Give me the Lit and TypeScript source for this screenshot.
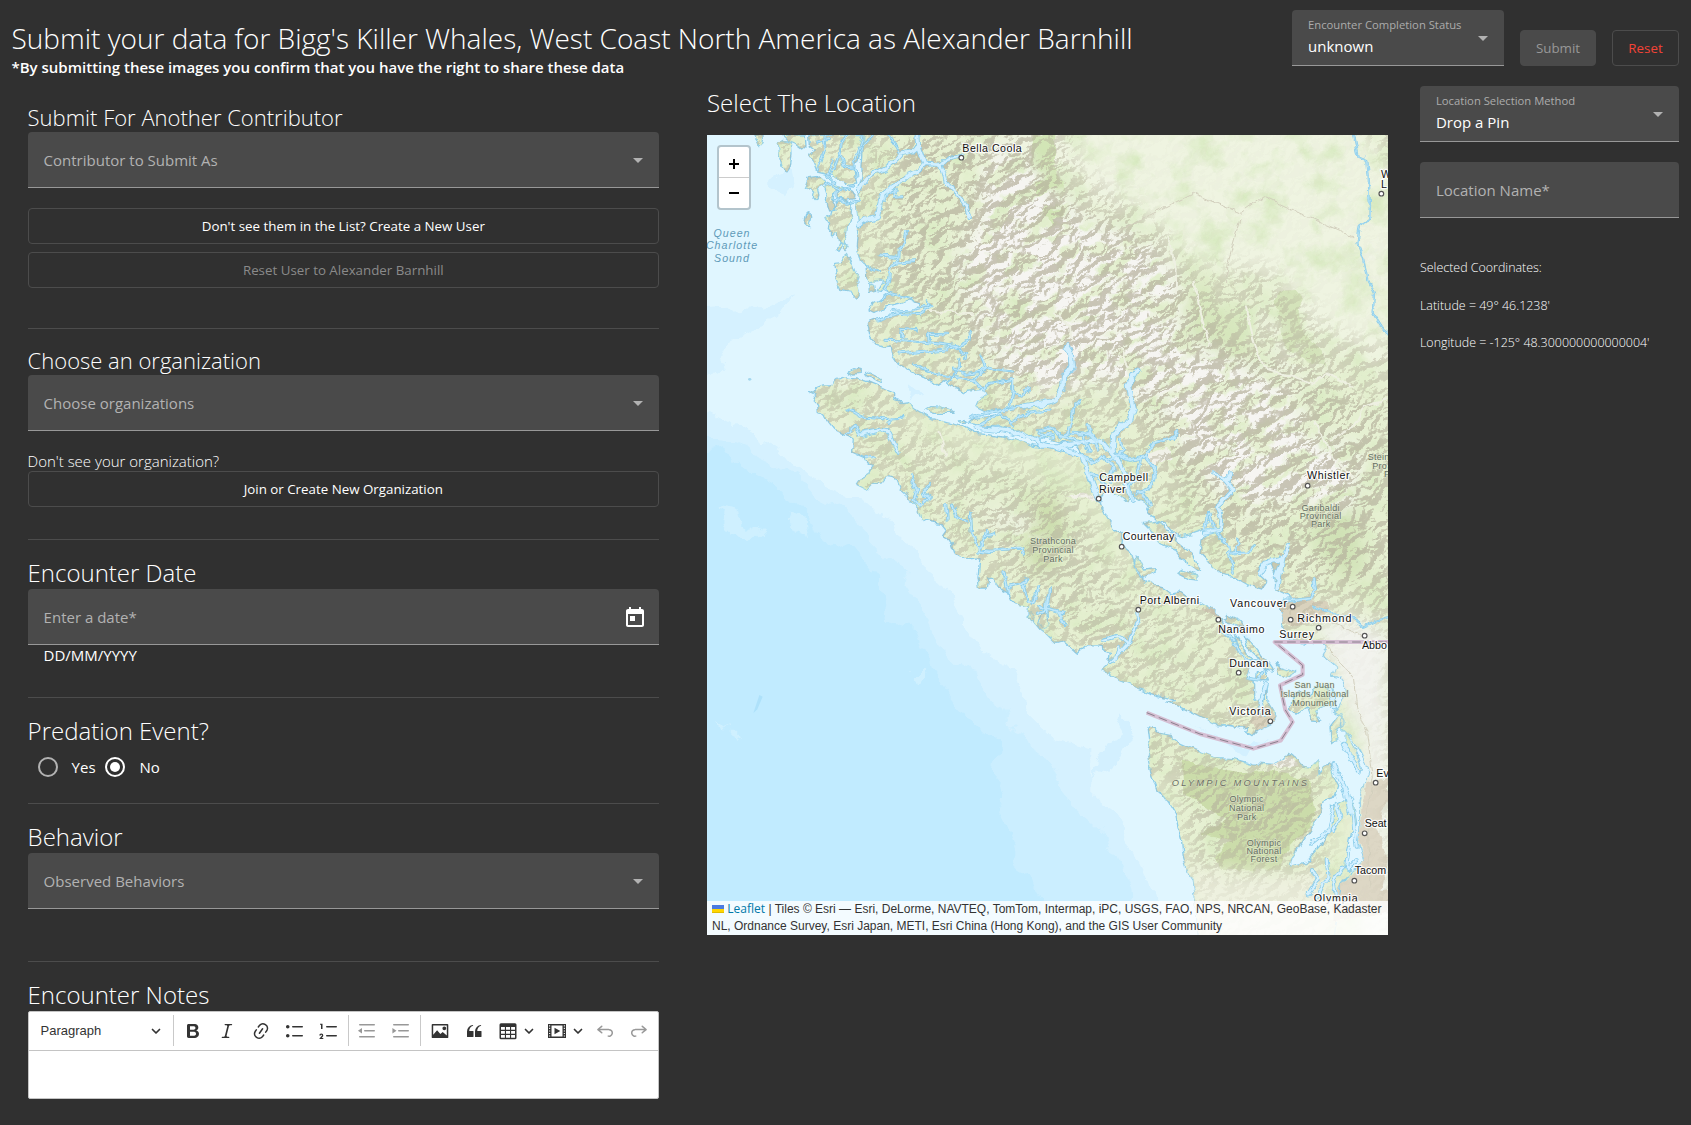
import { LitElement, html, css, svg } from "lit";
import { customElement, property } from "lit/decorators.js";

/* ---------- form field ---------- */
@customElement("form-field")
class FormField extends LitElement {
  @property() label = "";
  @property() value = "";
  @property() icon = "";
  static styles = css`
    :host { display: block; }
    .box {
      box-sizing: border-box; height: 56px; padding: 0 16px; display: flex; align-items: center;
      justify-content: space-between; background: #4a4a4a; border-bottom: 1px solid #989898;
      border-radius: 4px 4px 0 0;
    }
    .label { font-size: 15px; line-height: 22px; color: #b2b2b2; white-space: nowrap; }
    .stack { display: flex; flex-direction: column; padding-bottom: 3px; }
    .small { font-size: 11.25px; line-height: 20px; color: #acacac; white-space: nowrap; }
    .value { font-size: 15px; line-height: 22px; color: #fff; }
    .arrow { width: 0; border: 5px solid transparent; border-top-color: #b2b2b2; border-bottom: 0; margin-right: -1px; }
    .arrow-box { padding: 2px 1px 0 0; }
    .cal { width: 24px; height: 24px; fill: #fff; margin: 3px -4px 0 0; }
  `;
  render() {
    return html`<div class="box">
      ${this.value
        ? html`<div class="stack"><span class="small">${this.label}</span><span class="value">${this.value}</span></div>`
        : html`<span class="label">${this.label}</span>`}
      ${this.icon === "arrow" ? html`<div class="arrow-box"><div class="arrow"></div></div>` : ""}
      ${this.icon === "calendar"
        ? html`<svg class="cal" viewBox="0 0 24 24"><path d="M19 3h-1V1h-2v2H8V1H6v2H5c-1.11 0-1.99.9-1.99 2L3 19c0 1.1.89 2 2 2h14c1.1 0 2-.9 2-2V5c0-1.1-.9-2-2-2zm0 16H5V8h14v11zM7 10h5v5H7z"/></svg>`
        : ""}
    </div>`;
  }
}

/* ---------- rich text editor ---------- */
const ICONS: Record<string, string> = {
  bold: "M10.187 17H5.773c-.637 0-1.092-.138-1.364-.415-.273-.277-.409-.718-.409-1.323V4.738c0-.617.14-1.062.419-1.332.279-.27.73-.406 1.354-.406h4.68c.69 0 1.288.041 1.793.124.506.083.96.242 1.36.478.341.197.644.447.906.75a3.262 3.262 0 0 1 .808 2.162c0 1.401-.722 2.426-2.167 3.075C15.05 10.175 16 11.315 16 13.01a3.756 3.756 0 0 1-2.296 3.504 6.1 6.1 0 0 1-1.517.377c-.571.073-1.238.11-2 .11zm-.217-6.217H7v4.087h3.069c1.977 0 2.965-.69 2.965-2.072 0-.707-.256-1.22-.768-1.537-.512-.319-1.277-.478-2.296-.478zM7 5.13v3.619h2.606c.729 0 1.292-.067 1.69-.2a1.6 1.6 0 0 0 .91-.765c.165-.267.247-.566.247-.897 0-.707-.26-1.176-.778-1.409-.519-.232-1.31-.348-2.375-.348H7z",
  italic: "m9.586 14.633.021.004c-.036.335.095.655.393.962.082.083.173.15.274.201h1.474a.6.6 0 1 1 0 1.2H5.304a.6.6 0 0 1 0-1.2h1.15c.474-.07.809-.182 1.005-.334.157-.122.291-.32.404-.597l2.416-9.55a1.053 1.053 0 0 0-.281-.823 1.12 1.12 0 0 0-.442-.296H8.15a.6.6 0 0 1 0-1.2h6.443a.6.6 0 1 1 0 1.2h-1.195c-.376.056-.65.155-.823.296-.215.175-.423.439-.623.79l-2.366 9.347z",
  link: "m11.077 15 .991-1.416a.75.75 0 1 1 1.229.86l-1.148 1.64a.748.748 0 0 1-.217.206 5.251 5.251 0 0 1-8.503-5.955.741.741 0 0 1 .12-.274l1.147-1.639a.75.75 0 1 1 1.228.86L4.933 10.7l.006.003a3.75 3.75 0 0 0 6.132 4.294l.006.004zm5.494-5.335a.748.748 0 0 1-.12.274l-1.147 1.639a.75.75 0 1 1-1.228-.86l.86-1.23a3.75 3.75 0 0 0-6.144-4.301l-.86 1.229a.75.75 0 0 1-1.229-.86l1.148-1.64a.748.748 0 0 1 .217-.206 5.251 5.251 0 0 1 8.503 5.955zm-4.563-2.532a.75.75 0 0 1 .184 1.045l-3.155 4.505a.75.75 0 1 1-1.229-.86l3.155-4.506a.75.75 0 0 1 1.045-.184z",
  bullets: "M7 5.75c0 .414.336.75.75.75h9.5a.75.75 0 1 0 0-1.5h-9.5a.75.75 0 0 0-.75.75zm-6 0C1 4.784 1.777 4 2.75 4c.966 0 1.75.777 1.75 1.75 0 .966-.777 1.75-1.75 1.75C1.784 7.5 1 6.723 1 5.75zm6 9c0 .414.336.75.75.75h9.5a.75.75 0 1 0 0-1.5h-9.5a.75.75 0 0 0-.75.75zm-6 0c0-.966.777-1.75 1.75-1.75.966 0 1.75.777 1.75 1.75 0 .966-.777 1.75-1.75 1.75-.966 0-1.75-.777-1.75-1.75z",
  numbers: "M7 5.75c0 .414.336.75.75.75h9.5a.75.75 0 1 0 0-1.5h-9.5a.75.75 0 0 0-.75.75zM3.5 3v5H2V3.7H1v-1h2.5V3zM.343 17.857l2.59-3.257H2.92a.6.6 0 1 0-1.04 0H.302a2 2 0 1 1 3.995 0h-.001c-.048.405-.16.734-.333.988-.175.254-.59.692-1.244 1.312H4.3v1h-4l.043-.043zM7 14.75a.75.75 0 0 1 .75-.75h9.5a.75.75 0 1 1 0 1.5h-9.5a.75.75 0 0 1-.75-.75z",
  outdent: "M2 3.75c0 .414.336.75.75.75h14.5a.75.75 0 1 0 0-1.5H2.75a.75.75 0 0 0-.75.75zm5 6c0 .414.336.75.75.75h9.5a.75.75 0 1 0 0-1.5h-9.5a.75.75 0 0 0-.75.75zM2.75 16.5h14.5a.75.75 0 1 0 0-1.5H2.75a.75.75 0 1 0 0 1.5zM5 6.9v5.7L.9 9.75z",
  indent: "M2 3.75c0 .414.336.75.75.75h14.5a.75.75 0 1 0 0-1.5H2.75a.75.75 0 0 0-.75.75zm5 6c0 .414.336.75.75.75h9.5a.75.75 0 1 0 0-1.5h-9.5a.75.75 0 0 0-.75.75zM2.75 16.5h14.5a.75.75 0 1 0 0-1.5H2.75a.75.75 0 1 0 0 1.5zM1.4 6.9v5.7l4.1-2.85z",
  image: "M2.6 2.9h14.8a.9.9 0 0 1 .9.9v12.4a.9.9 0 0 1-.9.9H2.6a.9.9 0 0 1-.9-.9V3.8a.9.9 0 0 1 .9-.9zM3.2 4.4v9.3l3.9-4.4 3.3 3.6 2.3-2 4.1 3.6V4.4zM14.3 5.4a1.9 1.9 0 1 1 0 3.8 1.9 1.9 0 0 1 0-3.8z",
  quote: "M3 10.423a6.5 6.5 0 0 1 6.056-6.408l.038.67C6.448 5.423 5.354 7.663 5.22 10H9c.552 0 .5.432.5.986v4.511c0 .554-.448.503-1 .503h-5c-.552 0-.5-.449-.5-1.003v-4.574zm8 0a6.5 6.5 0 0 1 6.056-6.408l.038.67c-2.646.739-3.74 2.979-3.873 5.315H17c.552 0 .5.432.5.986v4.511c0 .554-.448.503-1 .503h-5c-.552 0-.5-.449-.5-1.003v-4.574z",
  table: "M3 2.2h14a1.5 1.5 0 0 1 1.5 1.5v13a1.5 1.5 0 0 1-1.5 1.5H3a1.5 1.5 0 0 1-1.5-1.5v-13A1.5 1.5 0 0 1 3 2.2zM3 6v2.8h3.9V6zm5 0v2.8h4V6zm5.1 0v2.8H17V6zM3 9.9v2.8h3.9V9.9zm5 0v2.8h4V9.9zm5.1 0v2.8H17V9.9zM3 13.9v2.8h3.9v-2.8zm5 0v2.8h4v-2.8zm5.1 0v2.8H17v-2.8z",
  media: "M1 3h18v14H1zm1.1 1.3v1.1h1.1V4.300zm0 2.500v1.100h1.100V6.800zm0 2.600v1.100h1.100V9.400zm0 2.600v1.100h1.100V12zm0 2.500v1.100h1.100v-1.100zM16.800 4.300v1.100h1.100V4.300zm0 2.500v1.100h1.100V6.800zm0 2.600v1.100h1.100V9.400zm0 2.600v1.100h1.100V12zm0 2.500v1.100h1.100v-1.100zM4.500 4.500v11h11v-11zM7.500 6.700l5.800 3.300-5.800 3.300z",
  undo: "m5.042 9.367 2.189 1.837a.75.75 0 0 1-.965 1.149l-3.788-3.18a.747.747 0 0 1-.21-.284.75.75 0 0 1 .17-.945L6.23 4.762a.75.75 0 1 1 .964 1.15L4.863 7.866h8.917A.75.75 0 0 1 14 7.9a4 4 0 1 1-1.477 7.718l.344-1.489a2.5 2.5 0 1 0 1.094-4.73l.008-.032H5.042z",
  redo: "m14.958 9.367-2.189 1.837a.75.75 0 0 0 .965 1.149l3.788-3.18a.747.747 0 0 0 .21-.284.75.75 0 0 0-.17-.945L13.77 4.762a.75.75 0 1 0-.964 1.15l2.331 1.955H6.22A.75.75 0 0 0 6 7.9a4 4 0 1 0 1.477 7.718l-.344-1.489A2.5 2.5 0 1 1 6.039 9.400l-.008-.032h8.927z",
};

@customElement("notes-editor")
class NotesEditor extends LitElement {
  static styles = css`
    :host { display: block; }
    .editor { box-sizing: border-box; height: 88px; background: #fff; border: 1px solid #c4c4c4; border-radius: 2px; }
    .bar { box-sizing: border-box; height: 39px; border-bottom: 1px solid #c4c4c4; padding: 0 4px 1px; display: flex; align-items: center; gap: 4px; }
    .heading { box-sizing: border-box; width: 137.500px; padding: 0 8px; display: flex; align-items: center; justify-content: space-between; font: 13px "Liberation Sans", sans-serif; color: #333; }
    .heading span { padding-bottom: 1px; }
    .sep { width: 1px; height: 31px; background: #c9c9c9; }
    .btn { width: 30px; display: flex; justify-content: center; }
    .split { width: 45px; display: flex; align-items: center; gap: 6px; padding-left: 5px; box-sizing: border-box; }
    .icon { width: 20px; height: 20px; fill: #333; fill-rule: evenodd; flex: none; }
    .off { opacity: 0.5; }
    .chev { width: 10px; height: 10px; fill: none; stroke: #333; stroke-width: 1.7; stroke-linecap: round; stroke-linejoin: round; flex: none; }
  `;
  icon(n: string, off = false) {
    return html`<svg class="icon ${off ? "off" : ""}" viewBox="0 0 20 20"><path d=${ICONS[n]}></path></svg>`;
  }
  chev() { return html`<svg class="chev" viewBox="0 0 10 10"><path d="M1.500 3.500 5 7l3.500-3.500"/></svg>`; }
  btn(n: string, off = false) { return html`<div class="btn">${this.icon(n, off)}</div>`; }
  render() {
    return html`<div class="editor"><div class="bar">
      <div class="heading"><span>Paragraph</span>${this.chev()}</div>
      <div class="sep"></div>
      ${["bold", "italic", "link", "bullets", "numbers"].map((n) => this.btn(n))}
      <div class="sep"></div>
      ${this.btn("outdent", true)}${this.btn("indent", true)}
      <div class="sep"></div>
      ${this.btn("image")}${this.btn("quote")}
      <div class="split">${this.icon("table")}${this.chev()}</div>
      <div class="split">${this.icon("media")}${this.chev()}</div>
      ${this.btn("undo", true)}${this.btn("redo", true)}
    </div></div>`;
  }
}

/* ---------- map: three map units make one pixel ---------- */
const LAND = [
  // northern islands
  "M165 165L190 165 184 190 177 197 170 182Z",
  "M236 190L246 184 274 188 276 225 270 262 261 276 246 256 238 226Z",
  "M243 165L262 182 285 192 305 207 318 196 316 165Z",
  "M326 165L328 198 346 212 326 228 340 246 352 276 392 286 420 300 446 316 470 312 462 262 474 240 492 165Z",
  "M310 328L322 296 362 291 376 304 368 318 352 326 357 346 348 362 340 352 344 336 330 322Z",
  "M374 322L392 312 406 314 404 350 398 372 402 388 386 390 378 366 382 346Z",
  "M412 318L440 326 462 340 460 356 436 362 411 356Z",
  "M396 386L410 366 436 362 456 372 452 410 442 438 440 462 428 492 416 486 412 458 396 468 382 452 386 430 378 416 392 410Z",
  "M314 430L320 402 330 398 332 412 326 440Z",
  "M404 550L428 548 426 532 442 520 454 544 466 580 474 590 470 606 478 640 470 654 452 634 422 628 412 596Z",
  "M410 506L416 490 424 498 414 514Z M430 508L432 492 444 496 436 512Z",
  "M508 634L506 612 524 616 526 632Z M532 632L546 608 556 612 544 634Z",
  // mainland
  "M492 165L486 260 486 290 476 330 470 380 476 440 472 500 484 545 498 556 500 590 508 606 540 600 556 606 552 626 572 640 546 660 510 676 504 690 520 698 560 680 600 672 632 660 660 668 640 690 560 708 514 724 502 738 506 764 532 794 552 800 574 798 578 828 598 858 640 880 680 892 712 916 738 898 742 916 766 926 790 936 826 930 852 928 860 944 834 964 826 982 850 994 900 984 902 1002 866 1010 820 1016 806 1030 860 1040 900 1038 934 1052 974 1052 1000 1070 1030 1072 1060 1080 1142 1104 1158 1130 1164 1180 1186 1230 1204 1254 1218 1236 1262 1250 1282 1268 1290 1240 1330 1262 1350 1300 1390 1338 1392 1352 1450 1370 1480 1362 1516 1350 1530 1350 1506 1380 1500 1420 1538 1460 1570 1486 1610 1494 1650 1516 1684 1524 1700 1502 1674 1478 1680 1462 1710 1442 1724 1480 1728 1530 1770 1550 1766 1562 1740 1572 1752 1600 1742 1642 1776 1684 1800 1684 1870 1690 1880 1714 1872 1730 1908 1760 1898 1788 1920 1792 1936 1812 1940 1840 1920 1870 1900 1896 1926 1914 1920 1942 1950 1970 1976 2008 2010 2074 1986 2136 1978 2160 1980 2240 1976 2290 1992 2344 1960 2372 1930 2400 1916 2460 1900 2600 2100 2600 2100 100 480 100Z",
  "M1392 1326L1420 1360 1440 1390 1480 1420 1502 1474 1490 1474 1448 1440 1426 1412 1382 1390 1350 1350 1330 1330Z",
  "M1434 1480L1450 1470 1490 1486 1492 1500 1470 1498Z",
  "M1304 1440L1312 1430 1330 1470 1370 1466 1360 1480 1330 1494 1312 1474Z",
  // Gulf and San Juan islands
  "M1580 1606L1620 1624 1632 1640 1610 1636 1574 1622Z",
  "M1630 1670L1650 1684 1694 1738 1720 1776 1700 1770 1666 1724 1640 1700Z",
  "M1600 1650L1630 1706 1660 1740 1640 1742 1612 1700Z",
  "M1724 1750L1740 1762 1790 1778 1770 1790 1736 1780Z M1672 1772L1700 1774 1708 1800 1670 1798Z",
  "M1770 1880L1800 1832 1830 1850 1850 1818 1900 1830 1890 1870 1846 1890 1862 1922 1834 1920 1820 1880 1792 1902Z",
  "M1920 1900L1890 1940 1894 1990 1920 1980 1910 1950 1936 1930Z",
  "M1936 1960L1956 1990 1990 2070 1970 2072 1934 2000Z",
  // Vancouver Island
  "M326 934L340 940 350 926 368 918 386 918 412 898 436 890 468 894 500 904 530 916 560 930 584 940 584 960 606 968 620 966 642 984 680 1006 696 1016 740 1028 790 1040 826 1060 882 1066 948 1080 996 1098 1050 1106 1100 1112 1146 1124 1156 1160 1166 1212 1190 1240 1204 1280 1224 1320 1244 1348 1266 1362 1262 1394 1294 1420 1304 1450 1306 1476 1330 1500 1366 1518 1390 1524 1410 1538 1440 1536 1478 1562 1510 1572 1540 1590 1560 1612 1584 1660 1606 1680 1620 1716 1652 1756 1642 1790 1664 1812 1664 1856 1688 1870 1702 1822 1700 1860 1728 1908 1720 1926 1700 1936 1678 1946 1656 1970 1634 1954 1640 1940 1608 1950 1602 1938 1540 1932 1480 1902 1446 1886 1400 1866 1426 1862 1350 1840 1300 1820 1260 1804 1230 1778 1206 1770 1222 1756 1228 1720 1212 1716 1210 1696 1160 1694 1132 1720 1090 1684 1070 1690 1040 1660 1020 1646 984 1600 986 1580 940 1570 926 1540 900 1526 880 1494 866 1496 862 1524 838 1524 834 1490 840 1436 804 1440 766 1418 756 1390 726 1370 740 1350 724 1330 694 1326 670 1320 656 1290 630 1264 624 1250 600 1230 584 1190 560 1186 540 1210 520 1210 500 1230 468 1214 480 1196 506 1180 520 1160 492 1142 490 1130 458 1116 460 1080 434 1064 404 1048 380 1018 358 998 356 976 342 962 348 946Z",
  "M494 884L508 876 548 896 550 910 528 904Z M446 874L462 866 484 872 484 880 460 882Z",
  "M674 990L690 980 724 982 756 990 762 1000 700 1000Z M778 1020L798 1018 802 1026 784 1028Z",
  "M980 1606L994 1598 1006 1612 992 1626Z M1016 1630L1030 1600 1044 1600 1046 1640 1030 1646Z",
  // Olympic peninsula
  "M1344 1940L1366 1946 1380 1960 1410 1966 1440 1990 1500 2016 1540 2032 1600 2036 1660 2052 1720 2056 1756 2036 1768 2020 1786 2034 1800 2056 1830 2062 1850 2040 1854 2090 1870 2060 1890 2050 1900 2090 1916 2120 1906 2150 1870 2160 1862 2200 1840 2240 1804 2290 1776 2330 1770 2360 1820 2346 1860 2300 1884 2260 1900 2220 1894 2180 1930 2160 1960 2170 1970 2230 1954 2260 1940 2330 1950 2380 1920 2420 1900 2600 1496 2600 1486 2450 1480 2400 1466 2380 1450 2330 1444 2280 1434 2240 1426 2200 1408 2170 1394 2150 1370 2130 1352 2080 1342 2020 1350 1990Z",
];

// Inlets and channels: [stroke width, path]
const INLETS: [number, string][] = [
  [9, "M654 165L656 200 638 214 606 222 590 240 572 256 546 270 516 280 494 304 478 330"],
  [11, "M654 200L672 250 650 274 622 288 600 310 572 326 546 346 538 380 532 412 500 420 478 436"],
  [8, "M784 224L744 236 726 254 672 252M724 256L738 304 774 344 800 380 806 414"],
  [3, "M566 165L590 200 604 224M486 165L478 200 464 240 468 290M440 165L424 190 420 220 404 262 390 290M374 165L378 200 362 240 352 270M520 165L490 190 478 230M420 210L436 262 460 264M400 240L380 290 402 306M350 186L392 178 M404 360L440 370 474 362M376 310L420 330 464 320"],
  [4, "M620 458L612 494 598 508 596 542 570 560 566 600 552 630M540 528L592 532M596 546L644 542M552 364L560 342 592 330 584 352 606 350"],
  [3, "M500 556L520 570 536 576M540 660L570 640 606 650 636 656M572 694L630 690 690 676 684 664"],
  [4, "M530 720L590 704 660 700 696 680M552 778L620 780 700 790 770 800 812 778 810 754M600 822L680 812 770 804"],
  [3, "M604 770L606 748 650 752M690 786L688 764 740 762M770 804L798 820 796 836M668 866L700 880 750 886M776 834L776 870 738 910M640 846L680 870M760 866L800 880 840 874"],
  [4, "M846 822L858 862 890 870 938 876M858 862L820 900 770 890M820 900L850 930 870 910 938 898 938 930 960 946 988 926M940 930L930 976 900 990M812 1012L900 990 970 980 1050 970"],
  [4, "M832 1040L900 1000 930 1030 990 996 1050 990M940 1040L912 1010M1010 1090L1040 1060 1060 1064M962 980L1016 974"],
  [14, "M1100 802L1116 826 1118 860 1092 884 1090 924 1070 960 1030 970 970 980"],
  [5, "M1144 962L1122 976 1116 1020 1106 1064 1084 1070"],
  [14, "M1312 872L1298 896 1284 920 1292 960 1298 986 1290 1020 1262 1040 1240 1066 1238 1110"],
  [11, "M1020 1098L1080 1098 1140 1088 1200 1078 1224 1108 1262 1150 1280 1210 1300 1260"],
  [12, "M826 1044L900 1050 980 1068 1020 1090 1100 1112 1150 1124 1160 1170 1180 1220 1200 1260"],
  [6, "M1436 1058L1408 1080 1360 1090 1334 1130 1290 1140 1256 1128 1230 1140M1162 1034L1170 1066 1196 1080M1020 1050L1052 1042 1086 1070 1150 1090M1262 1080L1270 1110 1250 1130"],
  [6, "M1340 1130L1366 1160 1360 1200 1340 1230 1310 1236M1150 1120L1176 1150 1210 1130 1240 1160 1230 1200M1170 1180L1200 1200 1240 1230M1320 1140L1310 1190 1290 1220 1300 1262M1330 1240L1350 1280"],
  [5, "M1020 1060L1060 1072 M1116 1060L1180 1064 1196 1110M1150 1070L1170 1110"],
  [9, "M1544 1180L1574 1198 1600 1230 1576 1256 1548 1280 1566 1310 1562 1350 1516 1360M1596 1184L1582 1200"],
  [4, "M1530 1300L1540 1340 1584 1400 1600 1480M1580 1420L1640 1416 1664 1394M1526 1300L1516 1350 1560 1352M1600 1420L1620 1390 1610 1374"],
  [12, "M1762 1394L1748 1430 1740 1480 1732 1520M1740 1440L1700 1450 1680 1480M1746 1440L1730 1490"],
  [5, "M1842 1494L1846 1530 1830 1556 1780 1562 1750 1560M1774 1680L1812 1690"],
  [4, "M444 990L500 1012 556 1016 606 1012M566 1030L580 1016M434 1064L466 1036 476 1062 540 1048 558 1052"],
  [7, "M480 1066L540 1050 566 1058 580 1086 596 1116"],
  [5, "M634 1188L650 1230 640 1260 660 1280 690 1250 668 1240 692 1210M494 1130L520 1130M740 1276L744 1320M758 1276L770 1310 800 1320M812 1300L814 1360 840 1410 870 1414 940 1408 968 1408 976 1428M860 1352L850 1390 834 1416M864 1366L884 1362"],
  [5, "M912 1478L926 1540M928 1520L960 1512 980 1500M968 1514L984 1560 1000 1570 1016 1518M1040 1550L1036 1590 1016 1600M1048 1530L1040 1600M1020 1580L1050 1590 1090 1600M1076 1596L1096 1630"],
  [7, "M1314 1590L1318 1620 1302 1650 1290 1684 1256 1720 1230 1746M1290 1684L1250 1668 1210 1680M1254 1700L1244 1740"],
  [5, "M1560 1640L1600 1680M1600 1690L1640 1740 1690 1750M1644 1796L1680 1800 1690 1772"],
  [10, "M1696 1810L1680 1870 1690 1900M1900 2050L1916 2090 1940 2140 1950 2200M1890 1830L1900 1880M1930 1990L1976 2070"],
  [7, "M1950 2160L1960 2220 1970 2300M1900 2180L1888 2250 1836 2290M1910 2170L1922 2210 1900 2250M1950 2300L1940 2370 1970 2340M1836 2370L1850 2400 1826 2440M1880 2340L1886 2390 1850 2450M1930 2360L1900 2400 1910 2460"],
  [2, "M1962 165L1976 230 2002 240 2006 290 2010 380 2008 416 1980 436 1972 490 1990 540 2002 600 2022 640 2018 700 2050 750 2070 764"],
  [2, "M2070 1610L2030 1622 1990 1640 1960 1616 1900 1600 1840 1580"],
];

// Towns: marker x, marker y, name, name x, name y
const CITIES: [number, number, string, number, number][] = [
  [784, 233, "Bella Coola", 787, 216],
  [1196, 1256, "Campbell", 1198, 1203], [0, 0, "River", 1197, 1239],
  [2044, 341, "W", 2043, 294], [0, 0, "L", 2043, 324],
  [1823, 1217, "Whistler", 1821, 1197],
  [1265, 1400, "Courtenay", 1268, 1379],
  [1315, 1589, "Port Alberni", 1319, 1571],
  [1778, 1580, "Vancouver", 1590, 1580],
  [1555, 1619, "Nanaimo", 1555, 1658],
  [1772, 1619, "Richmond", 1792, 1625],
  [1856, 1643, "Surrey", 1738, 1673],
  [1994, 1667, "Abbo", 1986, 1707],
  [1616, 1778, "Duncan", 1588, 1760],
  [1711, 1924, "Victoria", 1588, 1904],
  [2027, 2108, "Ev", 2029, 2090],
  [1994, 2260, "Seat", 1994, 2240],
  [1963, 2402, "Tacom", 1964, 2381],
  [0, 0, "Olympia", 1841, 2467],
];

const WIDTH: Record<string, number> = {
  "Bella Coola": 178, Campbell: 146, River: 80, Whistler: 128, Courtenay: 155, "Port Alberni": 178,
  Vancouver: 171, Nanaimo: 138, Richmond: 162, Surrey: 104, Duncan: 117, Victoria: 124, Olympia: 132,
};

const PARKS: [string[], number, number, number][] = [
  [["Strathcona", "Provincial", "Park"], 1059, 1391, 27],
  [["Garibaldi", "Provincial", "Park"], 1862, 1292, 25],
  [["San Juan", "Islands National", "Monument"], 1844, 1824, 27],
  [["Olympic", "National", "Park"], 1640, 2166, 27],
  [["Olympic", "National", "Forest"], 1692, 2297, 25],
];

@customElement("coast-map")
class CoastMap extends LitElement {
  static styles = css`
    :host { display: block; }
    .map { position: relative; width: 681px; height: 800px; overflow: hidden; background: #e0f6ff; }
    .canvas { display: block; width: 681px; height: 800px; }
    .zoom { position: absolute; left: 10px; top: 10px; border: 2px solid rgba(0, 0, 0, 0.2); border-radius: 4px; background-clip: padding-box; width: 30px; background-color: #fff; }
    .zbtn { height: 30px; display: flex; align-items: center; justify-content: center; box-sizing: border-box; }
    .zbtn:first-child { height: 31px; border-bottom: 1px solid #ccc; padding-top: 3px; }
    .sign { width: 12px; height: 12px; stroke: #000; stroke-width: 2; }
    .credit { position: absolute; left: 0; right: 0; bottom: 0; height: 34px; padding: 0 5px; background: rgba(255, 255, 255, 0.8); font: 12px/17px "Liberation Sans", sans-serif; color: #333; white-space: nowrap; }
    .leaflet { color: #0078a8; font-family: "Open Sans", sans-serif; line-height: 1; }
    .flag { width: 12px; height: 8px; vertical-align: baseline; }
    .city { font: 32px "Liberation Sans", sans-serif; fill: #111; stroke: #fff; stroke-width: 7px; stroke-opacity: 0.85; paint-order: stroke; stroke-linejoin: round; }
    .park { font: 27px "Liberation Sans", sans-serif; fill: #646f61; stroke: #e9f0d8; stroke-width: 4px; stroke-opacity: 0.6; paint-order: stroke; text-anchor: middle; letter-spacing: 0.8px; }
    .park.cut { text-anchor: start; }
    .sea { font: italic 32px "Liberation Sans", sans-serif; fill: #5e9ab8; text-anchor: middle; letter-spacing: 3px; }
    .range { font: italic 28px "Liberation Sans", sans-serif; fill: #6b6e63; stroke: #e9f0d8; stroke-width: 3px; stroke-opacity: 0.5; paint-order: stroke; letter-spacing: 6px; }
  `;
  render() {
    const land = LAND.join(" ");
    return html`<div class="map">
      <svg class="canvas" viewBox="21 165 2043 2400">
        <defs>
          <clipPath id="land"><path d=${land}></path></clipPath>
          <filter id="relief" x="0" y="0" width="1" height="1" color-interpolation-filters="sRGB">
            <feTurbulence type="turbulence" baseFrequency="0.013 0.021" numOctaves="4" seed="11" result="n"></feTurbulence>
            <feColorMatrix in="n" type="matrix" values="0 0 0 0 0  0 0 0 0 0  0 0 0 0 0  1.2 0.5 0 0 0"></feColorMatrix>
            <feDiffuseLighting surfaceScale="34" diffuseConstant="1.300" lighting-color="#fff" result="l"><feDistantLight azimuth="250" elevation="50"></feDistantLight></feDiffuseLighting>
            <feColorMatrix in="l" type="matrix" values="0 0 0 0 0.71  0 0 0 0 0.69  0 0 0 0 0.61  -1.100 0 0 0 0.880"></feColorMatrix>
            <feComponentTransfer><feFuncA type="table" tableValues="0 0.420 0.620 0.700 0.720"></feFuncA></feComponentTransfer>
          </filter>
          <filter id="rock" x="0" y="0" width="1" height="1" color-interpolation-filters="sRGB">
            <feTurbulence type="fractalNoise" baseFrequency="0.013 0.022" numOctaves="5" seed="5"></feTurbulence>
            <feColorMatrix type="matrix" values="0 0 0 0 0.965  0 0 0 0 0.96  0 0 0 0 0.950  6 0 0 0 -2.250"></feColorMatrix>
          </filter>
          <filter id="meadow" x="0" y="0" width="1" height="1" color-interpolation-filters="sRGB">
            <feTurbulence type="fractalNoise" baseFrequency="0.012" numOctaves="5" seed="21"></feTurbulence>
            <feColorMatrix type="matrix" values="0 0 0 0 0.85  0 0 0 0 0.920  0 0 0 0 0.760  2.500 0 0 0 -1.100"></feColorMatrix>
          </filter>
          <filter id="soft" x="-0.300" y="-0.300" width="1.600" height="1.600"><feGaussianBlur stdDeviation="28"></feGaussianBlur></filter>
          <filter id="coastal" x="-0.100" y="-0.100" width="1.200" height="1.200"><feTurbulence type="fractalNoise" baseFrequency="0.03" numOctaves="3" seed="3"></feTurbulence><feDisplacementMap in="SourceGraphic" scale="22" xChannelSelector="R" yChannelSelector="G"></feDisplacementMap></filter>
          <filter id="depth" x="-0.100" y="-0.100" width="1.200" height="1.200"><feTurbulence type="fractalNoise" baseFrequency="0.012" numOctaves="4" seed="9"></feTurbulence><feDisplacementMap in="SourceGraphic" scale="80" xChannelSelector="R" yChannelSelector="G"></feDisplacementMap></filter>
          <mask id="reliefMask" maskUnits="userSpaceOnUse" x="0" y="100" width="2100" height="2500">
            <rect x="0" y="100" width="2100" height="2500" fill="#aaa"></rect>
            <g filter="url(#soft)">
              <path d="M600 165L1000 165 1120 380 1360 480 1440 620 1600 780 1840 880 2060 1000 2060 1520 1760 1500 1500 1300 1250 900 900 900 560 560Z" fill="#fff"></path>
              <path d="M1090 100L1970 100 2100 300 2100 800 1900 760 1700 560 1480 560 1350 420 1140 260Z" fill="#111"></path>
              <path d="M1840 1580L2070 1660 2070 2600 1880 2600 1900 1900Z" fill="#111"></path>
              <path d="M560 940L700 1000 1180 1120 1320 1500 1240 1460 1140 1260 900 1140 660 1060Z" fill="#444"></path>
              <path d="M700 1180L1100 1260 1240 1560 1300 1760 1100 1660Z" fill="#ccc"></path>
              <path d="M1440 2120L1800 2120 1800 2240 1560 2280Z" fill="#ddd"></path>
              <path d="M1460 2380L1900 2380 1900 2600 1460 2600Z M1350 2100L1430 2120 1480 2400 1440 2400Z" fill="#333"></path>
            </g>
          </mask>
          <mask id="rockMask" maskUnits="userSpaceOnUse" x="0" y="100" width="2100" height="2500">
            <g filter="url(#soft)">
              <path d="M860 210L960 220 1060 330 1160 420 1340 480 1440 600 1430 780 1560 820 1760 920 1840 1080 1980 1100 1960 1300 1720 1260 1640 1300 1500 1180 1400 1000 1200 900 1040 960 860 820 760 560 830 430Z" fill="#fff"></path>
              <path d="M980 520L1100 560 1120 680 1000 680Z M1320 680L1440 700 1440 800 1340 780Z" fill="#fff"></path>
              <path d="M1180 280L1260 320 1300 280Z M1940 440L2010 480 2060 640 1990 560Z M1640 660L1680 760 1760 880 1900 900Z" fill="#888"></path>
              <ellipse cx="440" cy="925" rx="36" ry="20" fill="#aaa"></ellipse>
              <path d="M820 1280L1000 1300 1080 1500 940 1400Z M1240 1700L1420 1740 1500 1780 1300 1720Z" fill="#777"></path>
            </g>
          </mask>
        </defs>

        <g filter="url(#depth)">
          <path d="M-80 700L150 690 300 640 290 660 200 730 100 790 40 880 -80 940Z M210 300L290 270 300 320 240 350Z" fill="#d5f1ff"></path>
          <path d="M-80 1000L40 1000 150 1060 240 1110 300 1180 430 1240 560 1300 620 1380 650 1440 720 1500 800 1640 850 1720 930 1760 960 1880 1060 1980 1180 2010 1180 2160 1260 2220 1340 2380 1380 2560 1400 2700 -80 2700Z" fill="#d5f1ff"></path>
          <path d="M-80 1080L100 1090 230 1150 320 1230 440 1300 540 1400 620 1520 700 1640 740 1740 830 1760 900 1880 950 1980 1060 2040 1110 2170 1220 2260 1290 2420 1320 2700 -80 2700Z" fill="#cbeeff"></path>
          <path d="M-80 1150L60 1120 220 1210 330 1330 460 1410 530 1500 550 1640 650 1660 700 1780 800 1900 900 1990 880 2120 960 2320 1030 2480 1060 2700 -80 2700Z" fill="#c1ebff"></path>
          <path d="M30 1280L100 1290 190 1360 160 1390 90 1360Z M250 1300L320 1330 330 1380 290 1360Z M50 1910L90 1950 80 1970Z M100 1970L120 1970 110 1990Z M630 1770L670 1770 650 1800Z" fill="#cff0ff"></path>
          <path d="M600 920L680 950 640 970Z M1420 1900L1560 1980 1700 1990 1620 2010Z M1260 1900L1300 1940 1240 2060 1180 2100 1240 1980Z M1600 1640L1660 1700 1640 1660Z" fill="#d3f0ff"></path>
        </g>
        <ellipse cx="149" cy="898" rx="5" ry="4" fill="#a5d7ee"></ellipse>
        <path d="M178 1845L188 1850 172 1888 160 1900Z" fill="#aee1fa"></path>

        <g filter="url(#coastal)">
          <path d=${land} fill="#e6f0d2" stroke="#8ccdea" stroke-width="4" stroke-linejoin="round"></path>
          <g clip-path="url(#land)">
            <path d="M840 165L1090 100 1980 100 2100 300 2100 900 1860 800 1700 600 1480 560 1300 420 1080 330Z" fill="#eff4e1" filter="url(#soft)"></path>
            <rect x="0" y="100" width="2100" height="2500" filter="url(#meadow)"></rect>
            <path d="M1000 165L1066 165 1064 260 1096 330 1080 450 1030 400 990 260Z" fill="#d2e5b6"></path>
            <path d="M1720 660L1740 632 1790 630 1812 656 1796 690 1800 740 1860 810 1880 860 1820 840 1750 800 1742 710Z" fill="#d4e3ba"></path>
            <path d="M1480 590L1510 570 1550 690 1620 690 1660 800 1640 880 1540 840 1440 760Z" fill="#d6e6bc" filter="url(#soft)"></path>
            <path d="M980 1250L1060 1240 1090 1300 1070 1480 1000 1480 970 1400 1010 1330Z" fill="#c9dba9" filter="url(#soft)"></path>
            <path d="M1820 1270L1960 1240 2000 1440 1980 1520 1880 1460Z" fill="#d0e2b6" filter="url(#soft)"></path>
            <path d="M1446 2034L1500 2056 1620 2080 1700 2072 1830 2100 1842 2190 1830 2240 1770 2300 1740 2370 1560 2366 1540 2330 1590 2280 1500 2260 1580 2220 1500 2170 1450 2140Z" fill="#cbdcaa"></path>
            <path d="M1460 2330L1560 2380 1880 2370 1900 2600 1470 2600Z" fill="#eef1df" filter="url(#soft)"></path>
            <path d="M1840 1600L2070 1640 2070 2600 1990 2600 1990 2000 1910 1800 1870 1700Z" fill="#f2f3ee" filter="url(#soft)"></path>
            <path d="M1746 1550L1880 1566 1886 1600 1830 1616 1800 1640 1740 1630 1750 1600Z M1640 1924L1700 1880 1740 1920 1680 1950Z M1500 1580L1550 1590 1570 1620 1550 1610Z" fill="#d9d2bd"></path>
            <path d="M2000 2110L2064 2090 2064 2160 2030 2240 2064 2330 2040 2440 2000 2450 1930 2460 1940 2400 1990 2350 1980 2280 1984 2180Z M1900 2440L1960 2380 1990 2440 2064 2430 2064 2500 1900 2520Z" fill="#ddd7c5"></path>
            <path d="M1330 1130L1400 1100 1420 1140 1360 1150Z M1100 1250L1180 1240 1190 1260Z M1700 2060L1770 2030 1790 2060Z" fill="#f1f1e8"></path>
            <g mask="url(#rockMask)"><rect x="-1000" y="-200" width="3600" height="3600" transform="rotate(-28 1050 1350)" filter="url(#rock)"></rect></g>
            <g mask="url(#reliefMask)"><rect x="-1000" y="-400" width="3800" height="3600" transform="rotate(-28 1050 1350)" filter="url(#relief)"></rect></g>
            <path d="M1480 600Q1500 700 1530 800M1406 470Q1430 520 1428 640M640 690L820 700M715 1050L738 1130M1640 680L1660 780 1690 860 1840 910 1880 880 1960 920M1060 700L1110 740 1114 790M1260 800L1290 860M1840 1020L1900 1140 1960 1190M2060 960L1990 980 1960 1040 1890 1080" fill="none" stroke="#eef0e2" stroke-width="6" stroke-linejoin="round"></path>
            <path d="M1240 460L1360 400 1480 340 1620 400 1690 350 1800 400 1960 470M1620 420L1580 560 1580 620M1870 1690L1960 1790 1970 1880 2000 1960 2020 2090 2000 2200 2010 2420M1900 1630L1990 1668" fill="none" stroke="#d2cfbd" stroke-width="3"></path>
          </g>
          ${INLETS.map(([w, d]) => svg`<path d=${d} fill="none" stroke="#8ccdea" stroke-width=${w + 5} stroke-linejoin="round" stroke-linecap="round"></path>`)}
          ${INLETS.map(([w, d]) => svg`<path d=${d} fill="none" stroke=${w > 6 ? "#d2f0ff" : "#bfe8fb"} stroke-width=${w} stroke-linejoin="round" stroke-linecap="round"></path>`)}
        </g>

        <path d="M1340 1898L1500 1962 1660 2006 1742 1982 1778 1926 1756 1890 1740 1816 1808 1784 1808 1756 1724 1686 2070 1686" fill="none" stroke="#d5bfd3" stroke-width="12" stroke-linejoin="round"></path>
        <path d="M1340 1898L1500 1962 1660 2006 1742 1982 1778 1926 1756 1890 1740 1816 1808 1784 1808 1756 1724 1686 2070 1686" fill="none" stroke="#8a7f8c" stroke-width="3" stroke-dasharray="26 13"></path>

        ${PARKS.map(([lines, x, y, step]) => lines.map((t, i) => svg`<text class="park" x=${x} y=${y + i * step}>${t}</text>`))}
        <text class="park cut" x="2003" y="1139">Stein</text>
        <text class="park cut" x="2017" y="1166">Pro</text>
        <text class="park cut" x="2052" y="1191">P</text>
        ${["Queen", "Charlotte", "Sound"].map((t, i) => svg`<text class="sea" x=${96} y=${471 + i * 37}>${t}</text>`)}
        <text class="range" x="1415" y="2117" textLength="412">OLYMPIC MOUNTAINS</text>
        ${CITIES.map(([cx, cy, t, x, y]) => svg`
          ${cx ? svg`<circle cx=${cx} cy=${cy} r="7" fill="#fff" stroke="#555" stroke-width="3.500"></circle>` : ""}
          ${WIDTH[t]
            ? svg`<text class="city" x=${x} y=${y} textLength=${WIDTH[t]}>${t}</text>`
            : svg`<text class="city" x=${x} y=${y}>${t}</text>`}`)}
      </svg>
      <div class="zoom">
        <div class="zbtn"><svg class="sign" viewBox="0 0 12 12"><path d="M1 6h10M6 1v10"/></svg></div>
        <div class="zbtn"><svg class="sign" viewBox="0 0 12 12"><path d="M1 6h10"/></svg></div>
      </div>
      <div class="credit">
        <svg class="flag" viewBox="0 0 12 8"><path fill="#4C7BE1" d="M0 0h12v4H0z"/><path fill="#FFD500" d="M0 4h12v3H0z"/><path fill="#E0BC00" d="M0 7h12v1H0z"/></svg>
        <span class="leaflet">Leaflet</span> | Tiles © Esri — Esri, DeLorme, NAVTEQ, TomTom, Intermap, iPC, USGS, FAO, NPS, NRCAN, GeoBase, Kadaster<br>NL, Ordnance Survey, Esri Japan, METI, Esri China (Hong Kong), and the GIS User Community
      </div>
    </div>`;
  }
}

/* ---------- page ---------- */
@customElement("app-root")
class AppRoot extends LitElement {
  static styles = css`
    :host { display: block; height: 1125px; overflow: hidden; background: #303030; color: #fff; font-family: "Open Sans", sans-serif; }
    .header { box-sizing: border-box; height: 76px; padding: 10px 12px 10px 11.500px; display: flex; justify-content: space-between; }
    .titles { padding-top: 8px; }
    .title { margin: 0; font-size: 28px; font-weight: 300; line-height: 40px; white-space: nowrap; }
    .note { margin: 0; font-size: 15px; font-weight: 600; line-height: 18px; }
    .actions { display: flex; align-items: flex-end; gap: 16px; }
    .status { width: 212px; }
    .btn { box-sizing: border-box; height: 36px; border: 1px solid #4c4c4c; border-radius: 4px; display: flex; align-items: center; justify-content: center; font-size: 13.330px; color: #fff; }
    .submit { width: 76px; background: #4a4a4a; border-color: #4a4a4a; color: #989898; }
    .reset { width: 67px; color: #f44336; }
    .disabled { color: #8a8a8a; }
    .body { display: grid; grid-template-columns: 631.400px 681px 259px; column-gap: 48px; padding-left: 27.600px; }
    .body .right { margin-left: -16px; margin-right: 16px; }
    .left { padding-top: 24px; display: flex; flex-direction: column; }
    .h { margin: 0; font-size: 24px; font-weight: 300; line-height: 32px; height: 32px; white-space: nowrap; }
    .h.sm { font-size: 22px; line-height: 34px; }
    .hr { height: 1px; background: #4c4c4c; }
    .gap8 { margin-top: 8px; }
    .gap20 { margin-top: 20px; }
    .ask { margin: 20px 0 0; height: 20px; line-height: 20px; font-size: 15px; font-weight: 300; }
    .sec { margin-top: 14px; }
    .hint { padding-left: 16px; height: 22px; line-height: 20px; font-size: 15px; }
    .radios { display: flex; align-items: center; padding-left: 10px; height: 40px; font-size: 15px; }
    .dot { box-sizing: border-box; width: 20px; height: 20px; border: 2px solid #b2b2b2; border-radius: 50%; display: flex; align-items: center; justify-content: center; }
    .dot.on { border-color: #fff; margin-left: 9px; margin-right: 1px; }
    .dot.on::after { content: ""; width: 10px; height: 10px; border-radius: 50%; background: #fff; }
    .opt { padding-left: 14px; }
    .mid { padding-top: 11px; }
    .mid .h { margin-bottom: 16px; }
    .right { padding-top: 10px; display: flex; flex-direction: column; gap: 20px; }
    .coords { margin-top: 20px; font-size: 12.450px; font-weight: 300; color: #fff; display: flex; flex-direction: column; gap: 17.500px; line-height: 20px; white-space: nowrap; }
  `;
  render() {
    return html`
      <div class="header">
        <div class="titles">
          <h1 class="title">Submit your data for Bigg's Killer Whales, West Coast North America as Alexander Barnhill</h1>
          <p class="note">*By submitting these images you confirm that you have the right to share these data</p>
        </div>
        <div class="actions">
          <form-field class="status" label="Encounter Completion Status" value="unknown" icon="arrow"></form-field>
          <div class="btn submit">Submit</div>
          <div class="btn reset">Reset</div>
        </div>
      </div>
      <div class="body">
        <div class="left">
          <h2 class="h sm">Submit For Another Contributor</h2>
          <form-field label="Contributor to Submit As" icon="arrow"></form-field>
          <div class="btn gap20">Don't see them in the List? Create a New User</div>
          <div class="btn gap8 disabled">Reset User to Alexander Barnhill</div>
          <div class="hr" style="margin-top:40px"></div>
          <h2 class="h sm sec">Choose an organization</h2>
          <form-field label="Choose organizations" icon="arrow"></form-field>
          <p class="ask">Don't see your organization?</p>
          <div class="btn">Join or Create New Organization</div>
          <div class="hr" style="margin-top:32px"></div>
          <h2 class="h" style="margin-top:17px">Encounter Date</h2>
          <form-field label="Enter a date*" icon="calendar"></form-field>
          <div class="hint">DD/MM/YYYY</div>
          <div class="hr" style="margin-top:30px"></div>
          <h2 class="h" style="margin-top:17px">Predation Event?</h2>
          <div class="radios"><span class="dot"></span><span class="opt">Yes</span><span class="dot on"></span><span class="opt">No</span></div>
          <div class="hr" style="margin-top:16px"></div>
          <h2 class="h" style="margin-top:17px">Behavior</h2>
          <form-field label="Observed Behaviors" icon="arrow"></form-field>
          <div class="hr" style="margin-top:52px"></div>
          <h2 class="h" style="margin-top:17px">Encounter Notes</h2>
          <notes-editor></notes-editor>
        </div>
        <div class="mid">
          <h2 class="h">Select The Location</h2>
          <coast-map></coast-map>
        </div>
        <div class="right">
          <form-field label="Location Selection Method" value="Drop a Pin" icon="arrow"></form-field>
          <form-field label="Location Name*"></form-field>
          <div class="coords">
            <span>Selected Coordinates:</span>
            <span>Latitude = 49° 46.1238'</span>
            <span>Longitude = -125° 48.300000000000004'</span>
          </div>
        </div>
      </div>`;
  }
}
